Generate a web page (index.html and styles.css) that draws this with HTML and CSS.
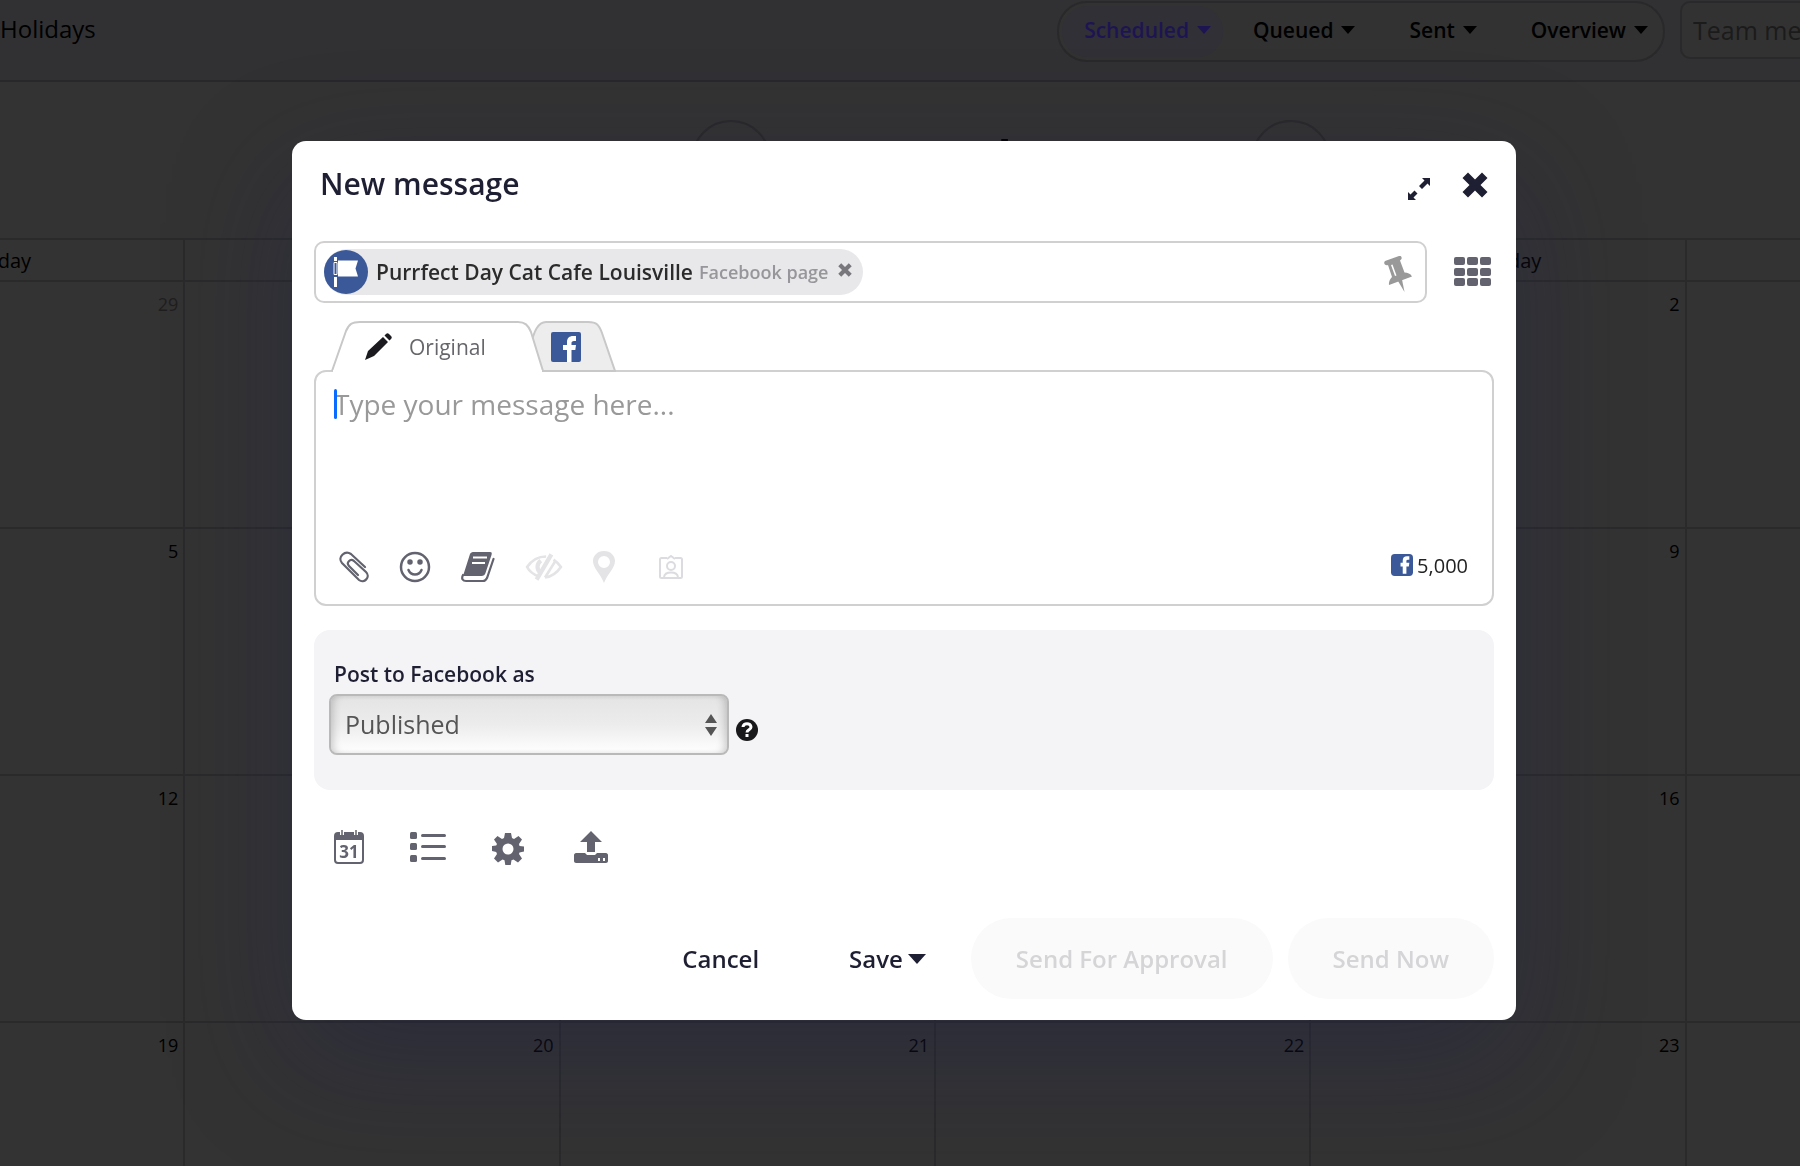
FILE: index.html
```
<!DOCTYPE html>
<html lang="en">
<head>
    <meta charset="UTF-8">
    <meta name="viewport" content="width=device-width, initial-scale=1.0">
    <title>New message</title>
    <link rel="stylesheet" href="styles.css">
</head>
<body>
    <!-- Calendar behind the dialog -->
    <div class="page">
        <header class="topbar">
            <span class="topbar-title">Holidays</span>
            <nav class="filters">
                <button type="button" class="filter active">Scheduled <i class="caret"></i></button>
                <button type="button" class="filter">Queued <i class="caret"></i></button>
                <button type="button" class="filter">Sent <i class="caret"></i></button>
                <button type="button" class="filter">Overview <i class="caret"></i></button>
            </nav>
            <input type="text" class="team-search" placeholder="Team members" aria-label="Team members">
        </header>

        <div class="month">
            <button type="button" class="month-arrow" aria-label="Previous month"></button>
            <h1>September 2021</h1>
            <button type="button" class="month-arrow" aria-label="Next month"></button>
        </div>

        <table class="calendar">
            <thead>
                <tr><th>Sunday</th><th>Monday</th><th>Tuesday</th><th>Wednesday</th><th>Thursday</th><th></th></tr>
            </thead>
            <tbody>
                <tr><td class="other">29</td><td class="other">30</td><td class="other">31</td><td>1</td><td>2</td><td></td></tr>
                <tr><td>5</td><td>6</td><td>7</td><td>8</td><td>9</td><td></td></tr>
                <tr><td>12</td><td>13</td><td>14</td><td>15</td><td>16</td><td></td></tr>
                <tr><td>19</td><td>20</td><td>21</td><td>22</td><td>23</td><td></td></tr>
            </tbody>
        </table>
    </div>

    <!-- New message dialog -->
    <div class="overlay">
        <form class="modal" role="dialog" aria-labelledby="modalTitle">
            <div class="modal-header">
                <h2 id="modalTitle">New message</h2>
                <button type="button" class="icon-btn expand" aria-label="Expand">
                    <svg width="22" height="22" viewBox="0 0 22 22" fill="#1f1f33"><path d="M22 0v8l-2.500-2.500-5.500 5.500-3-3 5.500-5.500L14 0zM0 22v-8l2.500 2.500L6.500 12.500l3 3L5.500 19.500 8 22z"/></svg>
                </button>
                <button type="button" class="icon-btn" aria-label="Close">
                    <svg width="26" height="26" viewBox="0 0 26 26" fill="#1f1f33"><path d="M6 0.500L13 7.500 20 .5 25.500 6 18.500 13l7 7L20 25.500l-7-7-7 7L.5 20l7-7-7-7z"/></svg>
                </button>
            </div>

            <div class="recipients">
                <div class="recipient-box">
                    <div class="chip">
                        <svg width="44" height="44" viewBox="0 0 44 44"><circle cx="22" cy="22" r="22" fill="#3b5998"/><path d="M11.500 7v4M11.500 27v10" stroke="#fff" stroke-width="3"/><path d="M10 12.500h3v12h-3z" fill="none" stroke="#fff"/><path d="M14 10.500h20l-2.500 8 2.500 8H14z" fill="#fff"/></svg>
                        <span class="chip-name">Purrfect Day Cat Cafe Louisville</span>
                        <span class="chip-type">Facebook page</span>
                        <button type="button" class="icon-btn chip-remove" aria-label="Remove">
                            <svg width="14" height="14" viewBox="0 0 26 26" fill="#77777c"><path d="M6 .5L13 7.500 20 .5 25.500 6 18.500 13l7 7L20 25.500l-7-7-7 7L.5 20l7-7-7-7z"/></svg>
                        </button>
                    </div>
                    <button type="button" class="icon-btn pin" aria-label="Pin">
                        <svg width="28" height="36" viewBox="0 0 28 36" fill="#999"><path fill-rule="evenodd" d="M1 5L15 0c2-.5 3 1 2.500 3l-1.500 1.500 4.500 12c3 0 6 1 7.500 4L5 29c-.5-3 1-6 3-8L4 9C1 10-1 7 1 5zM7 9l4 11 1.500-.5-4-11z"/><path d="M14 25l4-1.500L20.500 36z"/></svg>
                    </button>
                </div>
                <button type="button" class="icon-btn apps" aria-label="All accounts">
                    <svg width="38" height="30" viewBox="0 0 38 30" fill="#63636f"><rect width="11" height="8" rx="2"/><rect x="13" width="11" height="8" rx="2"/><rect x="26" width="11" height="8" rx="2"/><rect y="11" width="11" height="8" rx="2"/><rect x="13" y="11" width="11" height="8" rx="2"/><rect x="26" y="11" width="11" height="8" rx="2"/><rect y="21" width="11" height="8" rx="2"/><rect x="13" y="21" width="11" height="8" rx="2"/><rect x="26" y="21" width="11" height="8" rx="2"/></svg>
                </button>
            </div>

            <div class="tabs">
                <svg class="tabs-shape" width="286" height="51" viewBox="0 0 286 51" stroke="#c8c8c8" stroke-width="2"><path d="M200 26C204 10 208 1 216 1h42c9 0 11 3 14 11l13 38H212z" fill="#ededee"/><path d="M2 50L16 10C19 3 22 1 30 1h158c7 0 10 3 13 10l12 39" fill="#fff"/><path d="M3 50h209" stroke="#fff"/></svg>
                <button type="button" class="tab tab-original">
                    <svg width="28" height="28" viewBox="0 0 28 28" fill="#1b1b1f"><path d="M0 27l3-9L18 4l5 5L9 23zM19.500 2.500L21 1c1-1 2-1 3 0l2 2c1 1 1 2 0 3l-1.500 1.500z"/></svg>
                    Original
                </button>
                <button type="button" class="tab" aria-label="Facebook">
                    <svg width="30" height="30" viewBox="0 0 30 30"><rect width="30" height="30" rx="2" fill="#3b5998"/><path d="M16 30V18h-4v-5h4v-3c0-4 2.500-6 6-6h3v5h-2c-2 0-2.500 1-2.500 2v2H25l-.7 5h-3.800v12z" fill="#fff"/></svg>
                </button>
            </div>

            <div class="editor">
                <span class="text-cursor"></span>
                <textarea placeholder="Type your message here..." aria-label="Message"></textarea>
                <div class="editor-tools">
                    <button type="button" class="icon-btn" aria-label="Attach">
                        <svg width="30" height="32" viewBox="0 0 30 32" fill="none" stroke="#63636f" stroke-width="2.200" stroke-linecap="round"><path d="M26 16L12 3C6-1-2 6 3 12l17 17c5 4 12-3 7-8L15 10c-4-3-8 2-5 5l9 9"/></svg>
                    </button>
                    <button type="button" class="icon-btn" aria-label="Emoji">
                        <svg width="32" height="32" viewBox="0 0 32 32" fill="none" stroke="#63636f" stroke-width="2.500" stroke-linecap="round"><circle cx="16" cy="16" r="14"/><path d="M9.500 19c2.500 6 10.500 6 13 0"/><circle cx="11" cy="11" r="1.500" fill="#63636f"/><circle cx="21" cy="11" r="1.500" fill="#63636f"/></svg>
                    </button>
                    <button type="button" class="icon-btn" aria-label="Library">
                        <svg width="34" height="32" viewBox="0 0 34 32"><path d="M12 1h17c2 0 2 1 1.500 3l-6 18c-.5 2-2 3-4 3H2L9 3c.5-1 1.500-2 3-2z" fill="#63636f"/><path d="M2 24c-2 4 0 6 3 6h17c2 0 3-1 4-3l6.500-19" fill="none" stroke="#63636f" stroke-width="2.200" stroke-linecap="round"/><path d="M12 6.500h14M11 12h13" stroke="#fff" stroke-width="2"/></svg>
                    </button>
                    <button type="button" class="icon-btn" aria-label="Hide preview" disabled>
                        <svg width="38" height="30" viewBox="0 0 36 28" fill="none" stroke="#e4e4e7" stroke-width="2.500"><path d="M13 23C8 21 4 18 2 14 6 8 11 4 20 4M27 7c3 2 5 4 7 7-4 6-8 9-15 10M29 8L19 24"/><path d="M25 2L11 26M15 8c-4 3-4 8-1 11" stroke-width="4"/></svg>
                    </button>
                    <button type="button" class="icon-btn" aria-label="Location" disabled>
                        <svg width="22" height="32" viewBox="0 0 22 32" fill="#e4e4e7"><path fill-rule="evenodd" d="M11 0C4 0 0 5 0 10c0 7 7 12 11 22 4-10 11-15 11-22C22 5 18 0 11 0zm0 5a6 6 0 1 1 0 12 6 6 0 0 1 0-12z"/></svg>
                    </button>
                    <button type="button" class="icon-btn badge-btn" aria-label="Mention" disabled>
                        <svg width="24" height="24" viewBox="0 0 24 24" fill="none" stroke="#dcdce0" stroke-width="2"><path d="M8 3H2.500C1.500 3 1 3.500 1 4.500v17c0 1 .5 1.500 1.500 1.500h19c1 0 1.500-.5 1.500-1.500v-17c0-1-.5-1.500-1.500-1.500H16M8 4l4-3 4 3M5 22c1-6 13-6 14 0"/><circle cx="12" cy="11" r="4"/></svg>
                    </button>
                    <span class="char-count">
                        <svg width="22" height="22" viewBox="0 0 30 30"><rect width="30" height="30" rx="5" fill="#3b5998"/><path d="M16 27V17h-3v-5h3V9c0-4 2-6 6-6h3v5h-2c-2 0-2 1-2 2v2h4l-.7 5H21v10z" fill="#fff"/></svg>
                        5,000
                    </span>
                </div>
            </div>

            <div class="post-options">
                <label for="postAs">Post to Facebook as</label>
                <div class="post-row">
                    <div class="select-wrap">
                        <select id="postAs" name="postAs">
                            <option value="published">Published</option>
                            <option value="draft">Draft</option>
                        </select>
                        <svg class="select-arrows" width="12" height="24" viewBox="0 0 12 24" fill="#555"><path d="M6 1l6 9H0zM6 23l6-9H0z"/></svg>
                    </div>
                    <svg class="help" width="22" height="22" viewBox="0 0 22 22"><circle cx="11" cy="11" r="11" fill="#19191c"/><path d="M7 8c0-4.500 8-4.500 8 0 0 3-4 2.500-4 5.500" fill="none" stroke="#fff" stroke-width="3"/><path d="M9.500 15h3v3h-3z" fill="#fff"/></svg>
                </div>
            </div>

            <div class="message-tools">
                <button type="button" class="icon-btn" aria-label="Schedule">
                    <svg width="30" height="34" viewBox="0 0 30 34"><rect x="1" y="3" width="28" height="30" rx="3" fill="#fff" stroke="#63636f" stroke-width="2"/><path d="M1 4h28v6H1z" fill="#63636f"/><path d="M8 0v5M22 0v5" stroke="#fff" stroke-width="4"/><path d="M8 0v5M22 0v5" stroke="#63636f" stroke-width="1.500"/><text class="cal-day" x="15" y="28" text-anchor="middle">31</text></svg>
                </button>
                <button type="button" class="icon-btn" aria-label="Lists">
                    <svg width="36" height="30" viewBox="0 0 36 30" fill="#63636f"><rect width="7" height="7" rx="1.500"/><rect y="11" width="7" height="7" rx="1.500"/><rect y="23" width="7" height="7" rx="1.500"/><rect x="11" y="2" width="25" height="3" rx="1.500"/><rect x="11" y="13" width="25" height="3" rx="1.500"/><rect x="11" y="25" width="25" height="3" rx="1.500"/></svg>
                </button>
                <button type="button" class="icon-btn gear" aria-label="Settings">
                    <svg width="32" height="32" viewBox="0 0 32 32" fill="#63636f"><path fill-rule="evenodd" d="M13 0h6l1 5 2 1 4.500-3L30 6.500 27 11l.5 2 4.500.5v5l-4.500 1L27 21l3 4.500-4 4-4.500-3-2 .8-.8 4.700h-5.400l-.8-4.700-2-.8-4.500 3-4-4L5 21l-.8-2L0 18v-5l4.200-.5L5 11 2 6.500 5.500 3 10 6l2-1zM16 10.500a5.500 5.500 0 1 0 0 11 5.500 5.500 0 0 0 0-11z"/></svg>
                </button>
                <button type="button" class="icon-btn upload" aria-label="Upload">
                    <svg width="34" height="32" viewBox="0 0 34 32" fill="#63636f"><path d="M17 0l11 11h-7v10h-8V11H6z"/><path fill-rule="evenodd" d="M2 22h9l2 2h8l2-2h9c1 0 2 1 2 2v6c0 1-1 2-2 2H2c-1 0-2-1-2-2v-6c0-1 1-2 2-2zm22 5v3h2v-3zm5 0v3h2v-3z"/></svg>
                </button>
            </div>

            <div class="modal-footer">
                <button type="button" class="btn">Cancel</button>
                <button type="button" class="btn">Save<i class="caret"></i></button>
                <button type="button" class="btn pill" disabled>Send For Approval</button>
                <button type="submit" class="btn pill" disabled>Send Now</button>
            </div>
        </form>
    </div>
</body>
</html>
```
FILE: styles.css
```
* {
    margin: 0;
    padding: 0;
    box-sizing: border-box;
}

body {
    font-family: "Open Sans", sans-serif;
    color: #000;
    background: #333;
}

button, input, textarea, select {
    font-family: inherit;
    color: inherit;
}

button {
    background: none;
    border: none;
    cursor: pointer;
}

svg {
    display: block;
}

.caret {
    display: inline-block;
    border: 7px solid transparent;
    border-top: 8px solid currentColor;
    border-bottom: none;
}

/* Page behind, already dimmed */
.page {
    height: 100vh;
    overflow: hidden;
}

.topbar {
    display: flex;
    align-items: flex-start;
    gap: 15px;
    height: 82px;
    padding-top: 1px;
    background: #313134;
    border-bottom: 2px solid #28282b;
}

.topbar-title {
    flex: 1;
    font-size: 24px;
    line-height: 56px;
}

.filters {
    display: flex;
    padding: 3px;
    height: 61px;
    border: 2px solid #29292b;
    border-radius: 30px;
    background: #323232;
}

.filter {
    display: flex;
    align-items: center;
    gap: 8px;
    padding: 0 12px 4px 22px;
    margin-right: 20px;
    border-radius: 26px;
    font-size: 21px;
    font-weight: 600;
}

.filter:last-child {
    margin-right: 0;
}

.filter.active {
    margin-right: 8px;
    background: #303036;
    color: #1d1552;
}

.team-search {
    width: 120px;
    height: 58px;
    padding-left: 11px;
    border: 2px solid #29292b;
    border-right: none;
    border-radius: 10px 0 0 10px;
    background: #323232;
    font-size: 25px;
}

.team-search::placeholder {
    color: #1b1b1b;
}

.month {
    display: flex;
    justify-content: center;
    align-items: center;
    gap: 12px;
    height: 156px;
    padding-left: 222px;
}

.month h1 {
    font-size: 58px;
    font-weight: 600;
}

.month-arrow {
    width: 80px;
    height: 80px;
    border: 2px solid #29292b;
    border-radius: 50%;
}

.calendar {
    width: calc(100% + 454px);
    margin-left: -192px;
    table-layout: fixed;
    border-collapse: collapse;
}

.calendar th, .calendar td {
    border: 2px solid #2a2a2b;
}

.calendar th {
    height: 42px;
    font-size: 20px;
    font-weight: 400;
}

.calendar td {
    height: 247px;
    padding: 10px 5px;
    font-size: 18px;
    text-align: right;
    vertical-align: top;
}

.calendar .other {
    color: #1f1f1f;
}

/* Dialog */
.overlay {
    position: fixed;
    inset: 0;
    padding-top: 141px;
}

.modal {
    width: 68%;
    margin-left: calc(16% + 4px);
    padding: 0 22px 21px;
    border-radius: 14px;
    background: #fff;
    color: #1f1f33;
    box-shadow: 0 40px 120px rgba(35, 35, 70, 0.45);
}

.modal-header {
    display: flex;
    align-items: center;
    height: 100px;
    padding: 0 6px 12px;
}

.modal-header h2 {
    flex: 1;
    padding-bottom: 4px;
    font-size: 30px;
    font-weight: 600;
}

.expand {
    margin: 8px 32px 0 0;
}

.recipients {
    display: flex;
    align-items: center;
}

.recipient-box {
    flex: 1;
    display: flex;
    align-items: center;
    justify-content: space-between;
    height: 62px;
    padding: 0 13px 0 8px;
    border: 2px solid #d0d0d0;
    border-radius: 10px;
}

.pin {
    margin-top: 4px;
}

.apps {
    margin: 0 2px 0 27px;
}

.chip {
    display: flex;
    align-items: center;
    height: 46px;
    padding-right: 11px;
    border-radius: 23px;
    background: #e8e8eb;
}

.chip-name {
    margin: 0 6px 0 8px;
    font-size: 21px;
    font-weight: 600;
    color: #2b2b2b;
}

.chip-type {
    font-size: 18px;
    font-weight: 600;
    color: #96969b;
}

.chip-remove {
    margin: 0 0 4px 10px;
}

.tabs {
    position: relative;
    display: flex;
    align-items: center;
    height: 51px;
    margin: 18px 0 -2px 16px;
    z-index: 1;
}

.tabs-shape {
    position: absolute;
    left: 0;
    top: 0;
}

.tab {
    position: relative;
}

.tab-original {
    display: flex;
    align-items: center;
    gap: 16px;
    width: 186px;
    margin-left: 35px;
    font-size: 21px;
    color: #66666b;
}

.editor {
    position: relative;
    padding: 14px 24px 20px 18px;
    border: 2px solid #d0d0d0;
    border-radius: 12px;
}

.editor textarea {
    display: block;
    width: 100%;
    height: 164px;
    border: none;
    outline: none;
    resize: none;
    font-size: 28px;
    line-height: 36px;
}

.editor textarea::placeholder {
    color: #999;
}

.text-cursor {
    position: absolute;
    left: 18px;
    top: 17px;
    width: 3px;
    height: 30px;
    border-radius: 2px;
    background: #0a6cff;
}

.editor-tools {
    display: flex;
    align-items: center;
    gap: 30px;
    height: 34px;
    padding-left: 5px;
}

.badge-btn {
    margin-left: 14px;
}

.char-count {
    display: flex;
    align-items: center;
    gap: 4px;
    margin-left: auto;
    padding-bottom: 4px;
    font-size: 20px;
    color: #222;
}

.post-options {
    margin-top: 24px;
    padding: 26px 15px 35px;
    border-radius: 16px;
    background: #f4f4f7;
}

.post-options label {
    display: block;
    margin-bottom: 2px;
    padding-left: 5px;
    font-size: 21px;
    font-weight: 600;
    line-height: 36px;
}

.post-row {
    display: flex;
    align-items: center;
    gap: 7px;
}

.select-wrap {
    position: relative;
    width: 400px;
}

.select-wrap select {
    display: block;
    width: 100%;
    height: 61px;
    padding: 0 14px 2px;
    appearance: none;
    border: 2px solid #b9b9b9;
    border-radius: 8px;
    background: linear-gradient(#e4e4e4, #ececec 50%, #fff);
    box-shadow: inset 6px 0 8px -4px rgba(0, 0, 0, 0.2), inset -6px 0 8px -4px rgba(0, 0, 0, 0.2);
    font-size: 25px;
    color: #555;
}

.select-arrows {
    position: absolute;
    right: 12px;
    top: 19px;
    pointer-events: none;
}

.help {
    margin-top: 10px;
}

.message-tools {
    display: flex;
    align-items: center;
    gap: 46px;
    height: 34px;
    margin: 40px 0 54px 20px;
}

.gear {
    margin-top: 4px;
}

.upload {
    margin-left: 4px;
}

.cal-day {
    font-size: 17px;
    font-weight: 700;
    fill: #63636f;
}

.modal-footer {
    display: flex;
    justify-content: flex-end;
}

.btn {
    display: flex;
    align-items: center;
    gap: 5px;
    height: 81px;
    padding: 0 45px;
    border-radius: 41px;
    font-size: 24px;
    font-weight: 600;
}

.btn .caret {
    border-width: 10px 9px 0;
}

.pill {
    background: #fafafa;
    color: #d5d5d8;
}

.pill + .pill {
    margin-left: 15px;
}
```
